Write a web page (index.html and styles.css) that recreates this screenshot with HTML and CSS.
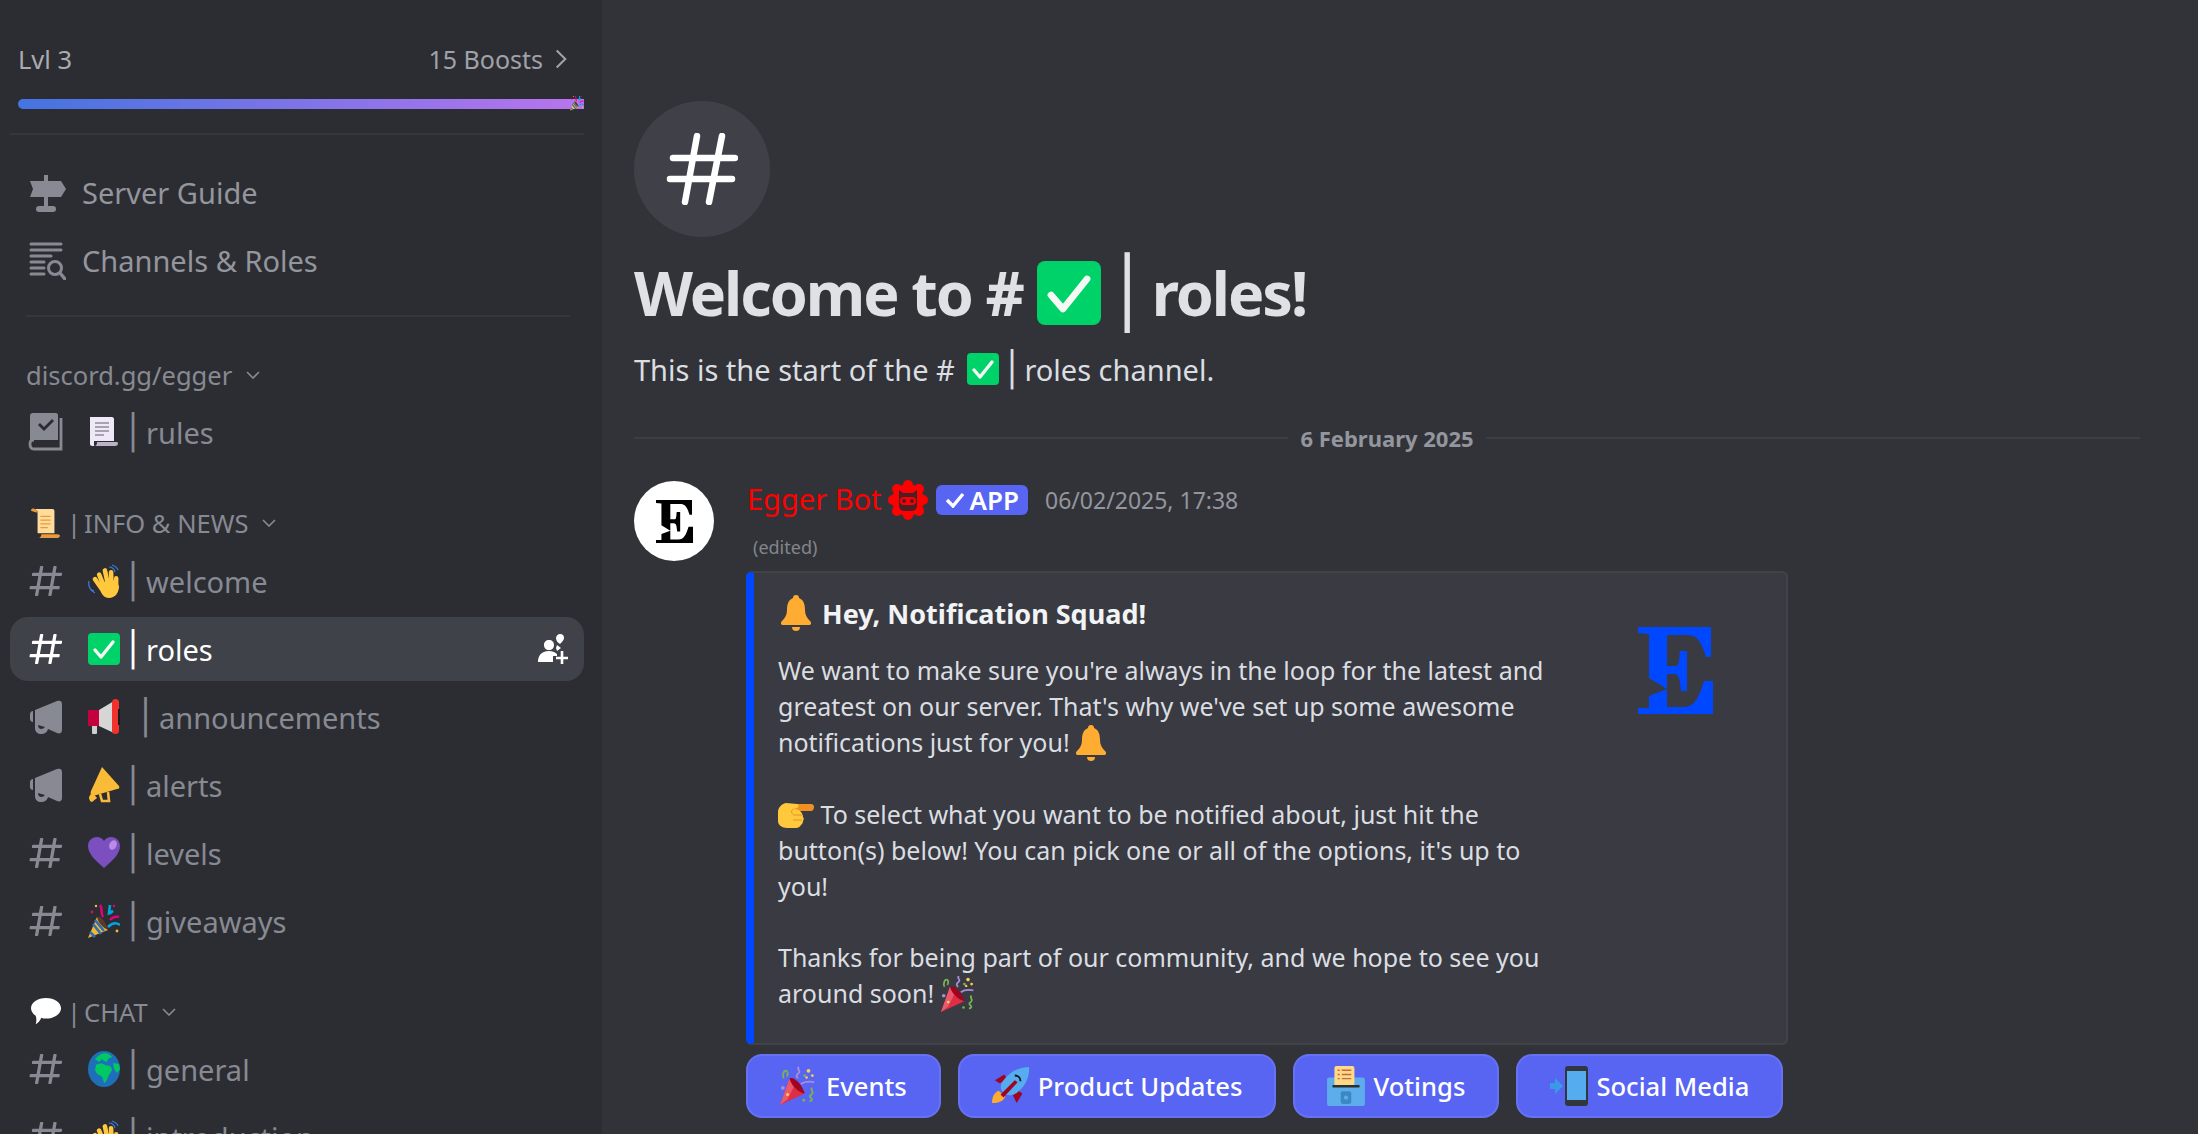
FILE: index.html
```html
<!DOCTYPE html>
<html lang="en">
<head>
  <meta charset="UTF-8">
  <title>roles</title>
  <link rel="stylesheet" href="styles.css">
</head>
<body>
  <svg class="defs" aria-hidden="true">
    <symbol id="hash" viewBox="0 0 24 24"><path fill="currentColor" fill-rule="evenodd" d="M5.89 21c-.31 0-.55-.28-.5-.59L6 17H2.6c-.31 0-.55-.28-.5-.59l.18-1c.04-.24.25-.41.49-.41h3.58l1.06-6H4c-.31 0-.54-.28-.49-.59l.17-1c.04-.24.25-.41.5-.41h3.58l.64-3.59c.04-.24.25-.41.49-.41h.98c.31 0 .55.28.5.59L9.76 7h6l.64-3.59c.04-.24.25-.41.49-.41h.98c.31 0 .55.28.5.59L17.76 7h3.4c.31 0 .55.28.5.59l-.18 1c-.04.24-.25.41-.49.41h-3.58l-1.06 6h3.4c.31 0 .55.28.5.59l-.18 1c-.04.24-.25.41-.49.41H16l-.64 3.59c-.04.24-.25.41-.49.41h-.98c-.31 0-.55-.28-.5-.59L14 17H8l-.64 3.59c-.04.24-.25.41-.49.41H5.89zM9.41 9l-1.06 6h6l1.06-6h-6z"/></symbol>
    <symbol id="horn" viewBox="0 0 32 34"><path fill="currentColor" fill-rule="evenodd" d="M3 11v11c-2 0-3-2-3-3v-5c0-1 1-3 3-3zM5 10L27 1c3-1 5 0 5 3v26c0 3-2 4-5 3l-9-4c-1 4-4 5-7 5-3 0-6-2-6-6zM8 25c0 3 2 4 3 4 2 0 3-1 4-2z"/></symbol>
    <symbol id="e-logo" viewBox="0 0 75 87"><path fill="currentColor" d="M0 0H73V30H68C64 17 60 8 50 8H29V39H38C42 39 41 28 42 24H49V64H43C42 56 42 47 36 47H29V80H45C57 80 61 70 66 54H75V87H0V81H11V69L29 62L11 51V7L0 6Z"/></symbol>

    <symbol id="e-check" viewBox="0 0 32 32"><rect width="32" height="32" rx="4" fill="#00d26a"/><path d="M7 17l6 7L25 9" fill="none" stroke="#f5f8f5" stroke-width="3.4" stroke-linecap="round" stroke-linejoin="round"/></symbol>
    <symbol id="e-page" viewBox="0 0 32 32"><path fill="#efe8f7" d="M2 1h22c1 0 2 1 2 2v22H6v5c-2 0-4 0-4-2z"/><path fill="#bdb1c9" d="M6 30c2 0 3-1 3-4h19c1 0 2 0 2 1 0 2-1 3-3 3z"/><path stroke="#8f8a99" stroke-width="1.6" d="M7 7h14M7 11h14M7 15h14M7 19h9"/></symbol>
    <symbol id="e-scroll" viewBox="0 0 32 32"><path fill="#ffdc9c" d="M4 1h19c1 0 2 1 2 2v24H8c-1 0-1-1-1-2V4c0-1-1-2-3-3z"/><path fill="#e89a3d" d="M0 3c0-2 2-3 4-2 2 1 3 2 3 4L3 4zM8 32c2 0 3-2 3-4h17c2 0 3 1 3 2l-2 2z"/><path stroke="#e89a3d" stroke-width="1.4" d="M10 9h11M10 13h11M10 17h11M10 21h8"/></symbol>
    <symbol id="e-wave" viewBox="0 0 32 34"><g fill="#ffc83d"><rect x="8" y="12" width="4.6" height="16" rx="2.3" transform="rotate(-35 10 20)"/><rect x="11" y="8" width="4.6" height="17" rx="2.3" transform="rotate(-22 13 16)"/><rect x="16" y="4" width="4.6" height="18" rx="2.3" transform="rotate(-12 18 13)"/><rect x="21" y="6" width="4.6" height="18" rx="2.3" transform="rotate(-2 23 15)"/><rect x="26" y="12" width="4.4" height="13" rx="2.2"/><path d="M10 19l17-3 4 6c0 7-4 12-10 12-6 0-9-6-11-15z"/></g><path d="M21 3c3 0 5 1 6 5M24 1c3 1 5 2 6 5M1 21c0 3 2 5 5 6M1 17c-1 4 1 10 6 12" fill="none" stroke="#3f7bd9" stroke-width="1.2"/></symbol>
    <symbol id="e-mega-red" viewBox="0 0 32 36"><rect x="4" y="26" width="5" height="9" rx="1" fill="#cfcfcf"/><path fill="#c4003f" d="M0 11h11v16H0z"/><path fill="#d6d6d6" d="M11 11l15-9v32l-15-7z"/><rect x="24" y="0" width="7" height="35" rx="3.5" fill="#f1312c"/><rect x="30" y="10" width="2" height="16" fill="#191a1d"/></symbol>
    <symbol id="e-mega-yellow" viewBox="0 0 32 36"><path fill="#f9bb38" d="M14 0l17 19c1 2 0 3-2 3L5 29c-2-1-3-3-2-5z"/><path fill="#f9bb38" d="M1 30l3-5 5 6-5 4c-2 0-3-3-3-5z"/><path fill="none" stroke="#f9bb38" stroke-width="2.6" d="M12 27l2 7h7l-1-9"/></symbol>
    <symbol id="e-heart" viewBox="0 0 32 32"><path fill="#7c4fc0" d="M16 31C8 24 0 17 0 9 0 3 5 0 9 0c3 0 6 2 7 4 1-2 4-4 7-4 4 0 9 3 9 9 0 8-8 15-16 22z"/><ellipse cx="25" cy="8" rx="3.6" ry="5" transform="rotate(25 25 8)" fill="#b98ce8"/></symbol>
    <symbol id="e-party" viewBox="0 0 32 36"><path fill="#f7b731" d="M9 14l11 13L0 35z"/><path stroke="#2b70b8" stroke-width="2.6" d="M5 21l8 10M2 29l5 5M7 17l9 11"/><path fill="#5c3a2b" d="M9 14c4-1 8 4 11 13-5-2-10-7-11-13z"/><path fill="none" stroke="#e6007e" stroke-width="2.4" d="M12 2c3 4 0 6 3 12M22 17c3-3 6-4 9-3"/><path fill="none" stroke="#00a6e0" stroke-width="2.6" d="M22 2l-1 8 4-2-4 3M20 24c4-4 8-5 12-2"/><g fill="#e6007e"><circle cx="4" cy="9" r="1.4"/><circle cx="26" cy="3" r="1.2"/></g><g fill="#f7b731"><circle cx="29" cy="28" r="1.4"/><circle cx="8" cy="3" r="1.2"/></g></symbol>
    <symbol id="e-bubble" viewBox="0 0 32 30"><path fill="#fff" d="M16 0c9 0 16 5 16 11s-7 11-16 11c-2 0-3 0-5-1-1 3-4 6-6 7 1-3 1-6 0-9-3-2-5-5-5-8C0 5 7 0 16 0z"/></symbol>
    <symbol id="e-earth" viewBox="0 0 32 36"><ellipse cx="16" cy="18" rx="16" ry="18" fill="#1e6fba"/><path fill="#00c864" d="M7 8c3-3 6-6 11-6 3 1 5 2 6 4l-4 2-1 3-3-1-2-2-3 3zM8 14c3-2 7-2 9 0l5 1 2 3c0 3-3 5-4 8-1 3-2 5-4 6-1-3-1-6-3-7-3-1-5-3-6-6zM25 12l6 1 1 5-3 4-3-4z"/></symbol>
    <symbol id="e-bell" viewBox="0 0 30 36"><path fill="#ffac33" d="M15 0c2 0 3 1 3 3 5 2 6 7 6 12 0 5 2 8 5 11 2 2 1 4-1 4H2c-2 0-3-2-1-4 3-3 5-6 5-11 0-5 1-10 6-12 0-2 1-3 3-3z"/><path fill="#ffac33" d="M11 32h8c0 3-2 4-4 4s-4-1-4-4z"/></symbol>
    <symbol id="e-point" viewBox="0 0 36 28"><path fill="#f19020" d="M36 6c0-2-1-3-3-3H17l-2 7h18c2 0 3-2 3-4z"/><path fill="#ffc83d" d="M0 11c0-4 3-8 8-9l11 1c2 0 2 3 0 4l-4 1c4 0 7 1 8 3 1 1 2 3 2 5 1 1 1 3 0 4 0 2-1 3-2 4-1 2-3 3-5 3H9c-5 0-9-3-9-7z"/><path fill="none" stroke="#e59420" stroke-width="1" d="M15 8c-2 2-2 4 0 5M15 14h9M15 19h9"/></symbol>
    <symbol id="e-popper" viewBox="0 0 40 40"><path fill="#dd2e44" d="M0 40l10-28 16 16z"/><path fill="#ea596e" d="M0 40l10-28 6 6-8 16z"/><path fill="#a0041e" d="M10 12c5-2 13 6 16 16-6-1-14-8-16-16z"/><g fill="none" stroke-width="2"><path stroke="#77b255" d="M4 12c-2-3 0-8 2-8s3 3 1 6M34 22c-3 2 2 4 0 6s-4 2-1 5c2 2-1 3-2 3"/><path stroke="#aa8dd8" d="M20 0c-3 2 2 4 0 6s-4 3-1 6M22 18c4-3 9-3 14-2"/></g><g fill="#fdcb58"><circle cx="30" cy="4" r="2"/><circle cx="34" cy="9" r="1.5"/><circle cx="8" cy="29" r="1.6"/><circle cx="28" cy="11" r="1.3"/></g><circle cx="3" cy="22" r="2" fill="#aa8dd8"/><circle cx="25" cy="35" r="1.5" fill="#77b255"/><circle cx="26" cy="9" r="1.5" fill="#77b255"/></symbol>
    <symbol id="e-rocket" viewBox="0 0 40 40"><path fill="#a0041e" d="M3 14l10-6 3 5-8 4zM26 24l6 4-6 10-4-8z"/><path fill="#ffac33" d="M0 38c0-6 2-11 7-13l7 6c-2 5-7 7-14 7z"/><path fill="#55acee" d="M39 0c1 10-4 21-14 28-5 3-11 2-14-2-3-4-2-9 2-13C19 5 29 0 39 0z"/><path fill="#a0041e" d="M9 29l15-15 3 2-15 16z"/><path fill="none" stroke="#111" stroke-width="2" d="M24 9c3 0 6 2 6 6"/></symbol>
    <symbol id="e-ballot" viewBox="0 0 36 38"><rect y="11" width="36" height="27" rx="2" fill="#5dadec"/><rect x="7" width="19" height="19" rx="2" fill="#ffd983"/><path stroke="#c1694f" stroke-width="1.4" d="M10 4h2M14 4h9M10 8h2M14 8h9M10 12h2M14 12h9"/><rect x="5" y="18" width="26" height="2.4" rx="1" fill="#292f33"/><rect x="13" y="24" width="10" height="12" rx="2" fill="#3b88c3"/><circle cx="18" cy="30" r="2" fill="#5dadec"/></symbol>
    <symbol id="e-phone" viewBox="0 0 38 40"><path fill="#3b9ae6" d="M0 17h5v-5l8 8-8 8v-5H0c-1 0-1-1-1-1v-4c0-1 1-1 1-1z"/><rect x="15" width="23" height="40" rx="3" fill="#31373d"/><rect x="17" y="5" width="19" height="29" fill="#55acee"/></symbol>
  </svg>

  <aside class="sidebar">
    <div class="boost-head">
      <span class="boost-lvl">Lvl 3</span>
      <span class="boost-count">15 Boosts
        <svg class="boost-arrow" viewBox="0 0 14 24"><path d="M2 2l10 10L2 22" fill="none" stroke="currentColor" stroke-width="2.4"/></svg>
      </span>
    </div>
    <div class="boost-bar">
      <svg class="boost-emoji"><use href="#e-party"/></svg>
    </div>
    <div class="rule rule-wide"></div>

    <div class="row nav-first">
      <svg class="row-icon" viewBox="0 0 40 40"><path fill="currentColor" d="M18 3h4v6h13l5 8-5 8H22v9h5c2 0 3 1 3 3s-1 3-3 3H13c-2 0-3-1-3-3s1-3 3-3h5v-9H4l3-8-3-8h14z"/></svg>
      <span class="row-label nav-label">Server Guide</span>
    </div>
    <div class="row">
      <svg class="row-icon" viewBox="0 0 40 40"><path fill="none" stroke="currentColor" stroke-width="3" stroke-linecap="round" d="M5 4h30M5 10h30M5 16h20M5 22h13M5 28h13M5 34h13"/><circle cx="29" cy="28" r="6.5" fill="none" stroke="currentColor" stroke-width="3"/><path stroke="currentColor" stroke-width="3.4" stroke-linecap="round" d="M34 33l5 6"/></svg>
      <span class="row-label nav-label">Channels &amp; Roles</span>
    </div>
    <div class="rule rule-narrow"></div>

    <div class="category cat-first">
      <span class="cat-label">discord.gg/egger</span>
      <svg class="chev" viewBox="0 0 14 8"><path d="M1 1l6 6 6-6" fill="none" stroke="currentColor" stroke-width="1.6"/></svg>
    </div>
    <div class="row rules-row">
      <svg class="row-icon" viewBox="0 0 40 40"><path fill="currentColor" fill-rule="evenodd" d="M7 1h23c1 0 2 1 2 2v25H8c-2 0-4 1-4 2V4c0-2 1-3 3-3zM12 13l2-2 4 4 8-8 2 2-10 10z"/><path fill="none" stroke="currentColor" stroke-width="2.8" d="M35 6v31H8c-2 0-4-1-4-5s2-4 4-4"/></svg>
      <svg class="row-emoji"><use href="#e-page"/></svg>
      <span class="pipe">│</span><span class="row-label">rules</span>
    </div>

    <div class="category">
      <svg class="cat-emoji"><use href="#e-scroll"/></svg>
      <span class="cat-label"><span class="cat-pipe">|</span>INFO &amp; NEWS</span>
      <svg class="chev" viewBox="0 0 14 8"><path d="M1 1l6 6 6-6" fill="none" stroke="currentColor" stroke-width="1.6"/></svg>
    </div>
    <div class="row cat-next">
      <svg class="row-icon"><use href="#hash"/></svg>
      <svg class="row-emoji"><use href="#e-wave"/></svg>
      <span class="pipe">│</span><span class="row-label">welcome</span>
    </div>
    <div class="row row-active">
      <svg class="row-icon"><use href="#hash"/></svg>
      <svg class="row-emoji"><use href="#e-check"/></svg>
      <span class="pipe">│</span><span class="row-label">roles</span>
      <svg class="invite" viewBox="0 0 30 30"><path fill="currentColor" d="M22 0c3 0 4 2 4 4s-2 4-4 6c-2-1-4-3-4-6 0-2 2-4 4-4zM11 6c3 0 5 2 5 5s-2 5-5 5-5-2-5-5 2-5 5-5zM11 17c3 0 6 1 8 3v2h-4v6H0c0-6 3-11 11-11zM19 11l4 3-4 3-1-3z"/><path stroke="currentColor" stroke-width="2.6" d="M24 17v13M18 24h12"/></svg>
    </div>
    <div class="row">
      <svg class="row-icon horn-icon"><use href="#horn"/></svg>
      <svg class="row-emoji"><use href="#e-mega-red"/></svg>
      <span class="pipe pipe-spaced">│</span><span class="row-label">announcements</span>
    </div>
    <div class="row">
      <svg class="row-icon horn-icon"><use href="#horn"/></svg>
      <svg class="row-emoji"><use href="#e-mega-yellow"/></svg>
      <span class="pipe">│</span><span class="row-label">alerts</span>
    </div>
    <div class="row">
      <svg class="row-icon"><use href="#hash"/></svg>
      <svg class="row-emoji"><use href="#e-heart"/></svg>
      <span class="pipe">│</span><span class="row-label">levels</span>
    </div>
    <div class="row">
      <svg class="row-icon"><use href="#hash"/></svg>
      <svg class="row-emoji"><use href="#e-party"/></svg>
      <span class="pipe">│</span><span class="row-label">giveaways</span>
    </div>

    <div class="category">
      <svg class="cat-emoji"><use href="#e-bubble"/></svg>
      <span class="cat-label"><span class="cat-pipe">|</span>CHAT</span>
      <svg class="chev" viewBox="0 0 14 8"><path d="M1 1l6 6 6-6" fill="none" stroke="currentColor" stroke-width="1.6"/></svg>
    </div>
    <div class="row cat-next chat-row">
      <svg class="row-icon"><use href="#hash"/></svg>
      <svg class="row-emoji"><use href="#e-earth"/></svg>
      <span class="pipe">│</span><span class="row-label">general</span>
    </div>
    <div class="row">
      <svg class="row-icon"><use href="#hash"/></svg>
      <svg class="row-emoji"><use href="#e-wave"/></svg>
      <span class="pipe">│</span><span class="row-label">introduction</span>
    </div>
  </aside>

  <main class="chat">
    <div class="channel-badge">
      <svg class="badge-hash" viewBox="0 0 72 72"><path fill="none" stroke="#fff" stroke-width="6.5" stroke-linecap="round" d="M7 25h62M4 46h62M31 3L19 69M56 3L43 69"/></svg>
    </div>
    <h1 class="welcome">Welcome to # <svg class="welcome-check"><use href="#e-check"/></svg><span class="welcome-pipe">│</span>roles!</h1>
    <p class="start">This is the start of the # <svg class="start-check"><use href="#e-check"/></svg><span class="start-pipe">│</span>roles channel.</p>

    <div class="date-line"><span>6 February 2025</span></div>

    <div class="message">
      <div class="avatar"><svg class="avatar-e"><use href="#e-logo"/></svg></div>
      <div class="msg-body">
        <div class="msg-head">
          <span class="author">Egger Bot</span>
          <svg class="bot-shield" viewBox="0 0 40 40">
            <g fill="#f00"><circle cx="20" cy="20" r="16"/><circle cx="20" cy="5" r="5"/><circle cx="20" cy="35" r="5"/><circle cx="5" cy="20" r="5"/><circle cx="35" cy="20" r="5"/><circle cx="9" cy="9" r="5"/><circle cx="31" cy="9" r="5"/><circle cx="9" cy="31" r="5"/><circle cx="31" cy="31" r="5"/></g>
            <path fill="#4a1e25" d="M11 10l4 3h10l4-3v16c0 3-3 5-5 5h-8c-2 0-5-2-5-5z"/>
            <rect x="12" y="17" width="16" height="8" rx="4" fill="#f00"/><circle cx="16" cy="21" r="2" fill="#4a1e25"/><circle cx="24" cy="21" r="2" fill="#4a1e25"/>
          </svg>
          <span class="app-tag">
            <svg class="app-check" viewBox="0 0 20 16"><path d="M2 8l6 6L18 2" fill="none" stroke="#fff" stroke-width="3.4"/></svg>APP
          </span>
          <span class="stamp">06/02/2025, 17:38</span>
        </div>
        <div class="edited">(edited)</div>

        <div class="embed">
          <div class="embed-main">
            <div class="embed-title"><svg class="emo-title"><use href="#e-bell"/></svg>Hey, Notification Squad!</div>
            <div class="embed-text">
              We want to make sure you're always in the loop for the latest and<br>
              greatest on our server. That's why we've set up some awesome<br>
              notifications just for you! <svg class="emo-inline"><use href="#e-bell"/></svg><br>
              <br>
              <svg class="emo-inline emo-point"><use href="#e-point"/></svg> To select what you want to be notified about, just hit the<br>
              button(s) below! You can pick one or all of the options, it's up to<br>
              you!<br>
              <br>
              Thanks for being part of our community, and we hope to see you<br>
              around soon! <svg class="emo-inline emo-popper"><use href="#e-popper"/></svg>
            </div>
          </div>
          <svg class="embed-thumb"><use href="#e-logo"/></svg>
        </div>

        <div class="buttons">
          <button class="btn"><svg class="btn-emoji"><use href="#e-popper"/></svg>Events</button>
          <button class="btn"><svg class="btn-emoji"><use href="#e-rocket"/></svg>Product Updates</button>
          <button class="btn"><svg class="btn-emoji"><use href="#e-ballot"/></svg>Votings</button>
          <button class="btn"><svg class="btn-emoji"><use href="#e-phone"/></svg>Social Media</button>
        </div>
      </div>
    </div>
  </main>
</body>
</html>
```
FILE: styles.css
```css
* {
  box-sizing: border-box;
}

html, body {
  height: 100%;
}

body {
  margin: 0;
  display: flex;
  overflow: hidden;
  font-family: "Noto Sans", "Open Sans", sans-serif;
  background: #323339;
  color: #dbdee1;
}

.defs {
  display: none;
}

/* sidebar */
.sidebar {
  width: 602px;
  height: 100vh;
  flex-shrink: 0;
  overflow: hidden;
  background: #2c2d32;
  color: #94969d;
  padding-top: 43px;
}

.boost-head {
  height: 32px;
  margin: 0 18px;
  padding-right: 17px;
  display: flex;
  align-items: center;
  justify-content: space-between;
  font-size: 25.5px;
}

.boost-lvl {
  color: #a9abb1;
}

.boost-count {
  display: flex;
  align-items: center;
  gap: 12px;
  font-size: 25px;
  color: #a0a2a9;
}

.boost-arrow {
  width: 12px;
  height: 22px;
}

.boost-bar {
  position: relative;
  height: 10px;
  margin: 24px 18px 0;
  border-radius: 5px 0 0 5px;
  background: linear-gradient(90deg, #4474e0, #b974ee);
}

.boost-emoji {
  position: absolute;
  right: 0;
  top: -6px;
  width: 14px;
  height: 20px;
}

.rule {
  height: 2px;
  background: #35363c;
}

.rule-wide {
  margin: 24px 18px 0 10px;
}

.rule-narrow {
  margin: 23px 32px 0 26px;
}

.row {
  height: 64px;
  width: 574px;
  margin: 4px 0 0 10px;
  padding-left: 16px;
  border-radius: 18px;
  display: flex;
  align-items: center;
  font-size: 29px;
  white-space: nowrap;
  color: #878a92;
}

.nav-first {
  margin-top: 25px;
}

.rules-row {
  margin-top: 7px;
}

.cat-next {
  margin-top: 8px;
}

.chat-row {
  margin-top: 7px;
}

.row-active {
  background: #404249;
  color: #fff;
}

.row-icon {
  width: 40px;
  height: 40px;
  flex-shrink: 0;
  color: #9a9ca3;
}

.row:not(.row-active) .row-icon {
  color: #878a92;
}

.row .horn-icon {
  width: 32px;
  height: 34px;
  margin: 0 4px;
  color: #9a9ca3;
}

.row-active .row-icon {
  color: #fff;
}

.row-emoji {
  width: 32px;
  height: 36px;
  margin-left: 22px;
  flex-shrink: 0;
}

.pipe {
  width: 26px;
  flex-shrink: 0;
  text-align: center;
  font-family: "DejaVu Sans", sans-serif;
  font-size: 34px;
  line-height: 40px;
}

.pipe-spaced {
  width: 39px;
  padding-left: 12px;
}

.nav-label {
  margin-left: 16px;
  color: #94969d;
}

.invite {
  width: 30px;
  height: 30px;
  margin-left: auto;
  margin-right: 16px;
  color: #fff;
}

.category {
  height: 36px;
  margin: 41px 0 0 26px;
  display: flex;
  align-items: center;
  font-size: 25.5px;
  color: #878a92;
  white-space: nowrap;
}

.cat-first {
  margin-top: 40px;
}

.cat-emoji {
  width: 30px;
  height: 30px;
  margin: 0 6px 0 5px;
}

.cat-pipe {
  margin-right: 3px;
}

.chev {
  width: 14px;
  height: 8px;
  margin-left: 14px;
}

/* main column */
.chat {
  flex: 1;
  min-width: 0;
  padding: 101px 58px 0 32px;
}

.channel-badge {
  width: 136px;
  height: 136px;
  border-radius: 50%;
  background: #404148;
  display: flex;
  align-items: center;
  justify-content: center;
}

.badge-hash {
  width: 72px;
  height: 72px;
}

.welcome {
  margin: 16px 0 0;
  height: 80px;
  display: flex;
  align-items: center;
  font-size: 61px;
  line-height: 80px;
  font-weight: 700;
  letter-spacing: -2.05px;
  color: #dfe1e4;
  white-space: pre;
}

.welcome-check {
  width: 64px;
  height: 64px;
}

.welcome-pipe {
  width: 51px;
  text-align: center;
  font-family: "DejaVu Sans", sans-serif;
  font-size: 68px;
  font-weight: 400;
  line-height: 80px;
}

.start {
  margin: 16px 0 0;
  height: 40px;
  display: flex;
  align-items: center;
  font-size: 29px;
  white-space: pre;
}

.start-check {
  width: 32px;
  height: 32px;
  margin-left: 5px;
}

.start-pipe {
  width: 25px;
  text-align: center;
  font-family: "DejaVu Sans", sans-serif;
  font-size: 34px;
  line-height: 40px;
}

.date-line {
  height: 24px;
  margin-top: 37px;
  display: flex;
  align-items: center;
  gap: 12px;
  font-size: 22px;
  font-weight: 700;
  color: #94969d;
}

.date-line::before, .date-line::after {
  content: "";
  flex: 1;
  height: 2px;
  background: #3d3e45;
}

.message {
  margin-top: 29px;
  display: flex;
}

.avatar {
  width: 80px;
  height: 80px;
  margin-top: 2px;
  border-radius: 50%;
  background: #fff;
  color: #000;
  display: flex;
  align-items: center;
  justify-content: center;
}

.avatar-e {
  width: 37px;
  height: 45px;
}

.msg-body {
  margin-left: 32px;
  flex: 1;
}

.msg-head {
  height: 42px;
  display: flex;
  align-items: center;
  white-space: nowrap;
  margin-left: 1px;
}

.author {
  font-size: 29px;
  line-height: 40px;
  margin-top: -2px;
  color: #f00;
}

.bot-shield {
  width: 40px;
  height: 40px;
  margin-left: 6px;
}

.app-tag {
  height: 30px;
  margin-left: 8px;
  padding: 0 9px;
  border-radius: 6px;
  background: #5865f2;
  color: #fff;
  display: flex;
  align-items: center;
  gap: 5px;
  font-size: 26px;
  font-weight: 600;
}

.app-check {
  width: 20px;
  height: 16px;
}

.stamp {
  margin-left: 17px;
  font-size: 23px;
  color: #94969d;
}

.edited {
  height: 24px;
  margin: 14px 0 0 7px;
  font-size: 18px;
  line-height: 24px;
  color: #83858c;
}

.embed {
  width: 1042px;
  height: 474px;
  margin-top: 12px;
  padding: 22px 73px 0 24px;
  background: #393a42;
  border: 2px solid #41424a;
  border-left: 8px solid #0048ff;
  border-radius: 6px;
  display: flex;
  justify-content: space-between;
}

.embed-title {
  height: 36px;
  display: flex;
  align-items: center;
  gap: 11px;
  font-size: 27px;
  font-weight: 700;
  color: #f2f3f5;
  margin-left: 3px;
  white-space: nowrap;
}

.embed-text {
  margin-top: 22px;
  font-size: 25px;
  line-height: 35.9px;
  white-space: nowrap;
}

.emo-title {
  width: 30px;
  height: 36px;
}

.emo-inline {
  width: 30px;
  height: 36px;
  vertical-align: -9px;
}

.emo-point {
  width: 36px;
  height: 28px;
  vertical-align: -5px;
}

.emo-popper {
  width: 36px;
  height: 36px;
}

.embed-thumb {
  width: 75px;
  height: 87px;
  margin-top: 32px;
  color: #0048ff;
  flex-shrink: 0;
}

.buttons {
  margin-top: 9px;
  display: flex;
  gap: 17px;
}

.btn {
  height: 64px;
  padding: 0 32px;
  border: 2px solid #6672f3;
  border-radius: 16px;
  background: #5865f2;
  color: #fff;
  display: flex;
  align-items: center;
  gap: 8px;
  font-family: inherit;
  font-size: 25.6px;
  font-weight: 500;
  white-space: nowrap;
}

.btn-emoji {
  width: 38px;
  height: 40px;
}
```
